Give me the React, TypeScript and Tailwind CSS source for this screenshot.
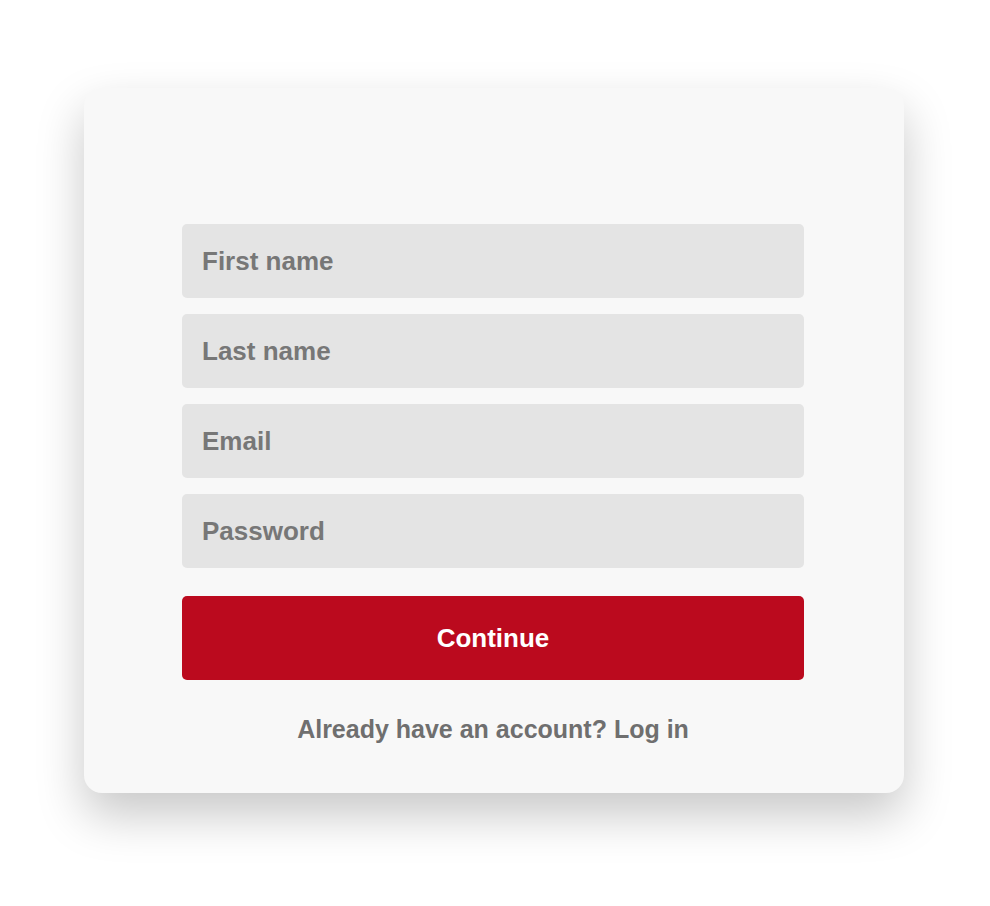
import React from 'react';

const fields = ['First name', 'Last name', 'Email', 'Password'];

export default function App() {
  return (
    <div
      className="min-h-[906px] w-full bg-white pt-[88px] pl-[84px]"
      style={{ fontFamily: '"Liberation Sans", Arial, sans-serif' }}
    >
      <div className="w-[820px] h-[705px] bg-[#f8f8f8] rounded-[18px] shadow-[0_22px_48px_rgba(0,0,0,0.22)] pt-[136px] pl-[98px] pr-[100px]">
        <form className="flex flex-col gap-4" onSubmit={(e) => e.preventDefault()}>
          {fields.map((f) => (
            <input
              key={f}
              type={f === 'Password' ? 'password' : 'text'}
              placeholder={f}
              className="h-[74px] w-full rounded-[5px] bg-[#e4e4e4] px-5 text-[26px] font-bold text-[#777] placeholder:text-[#777] outline-none"
            />
          ))}
          <button
            type="submit"
            className="mt-3 h-[84px] w-full rounded-[5px] bg-[#bb0a1e] text-[26px] font-bold text-white"
          >
            Continue
          </button>
        </form>
        <p className="mt-[33px] text-center text-[25px] leading-8 font-bold text-[#6f6f6f]">
          Already have an account? Log in
        </p>
      </div>
    </div>
  );
}
